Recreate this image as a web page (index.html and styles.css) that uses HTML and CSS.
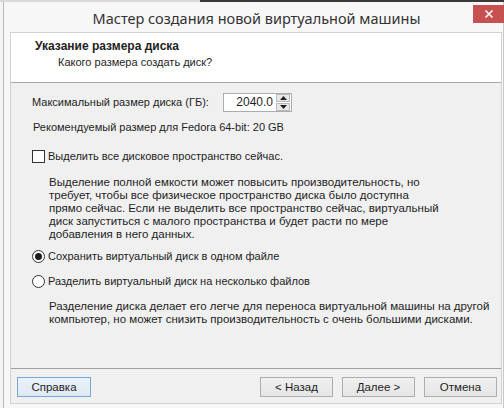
FILE: index.html
```html
<!DOCTYPE html>
<html lang="ru">
<head>
<meta charset="utf-8">
<link rel="stylesheet" href="styles.css">
</head>
<body>
<div class="desk"></div>
<div class="window">
  <div class="titlebar">
    <div class="title">Мастер создания новой виртуальной машины</div>
    <div class="close"><svg width="10" height="10" viewBox="0 0 10 10"><path d="M1.5 1.5 L8.5 8.5 M8.5 1.5 L1.5 8.5" stroke="#fff" stroke-width="1.6"/></svg></div>
  </div>
  <div class="client">
    <div class="header">
      <div class="h-title">Указание размера диска</div>
      <div class="h-sub">Какого размера создать диск?</div>
    </div>
    <div class="body">
      <div class="row size-row">
        <span class="size-label">Максимальный размер диска (ГБ):</span>
        <div class="spin">
          <span class="spin-val">2040.0</span>
          <div class="spin-btns">
            <div class="sb"><svg width="7" height="4" viewBox="0 0 7 4"><path d="M0 4 L3.5 0 L7 4Z" fill="#222"/></svg></div>
            <div class="sb"><svg width="7" height="4" viewBox="0 0 7 4"><path d="M0 0 L3.5 4 L7 0Z" fill="#222"/></svg></div>
          </div>
        </div>
      </div>
      <div class="rec">Рекомендуемый размер для Fedora 64-bit: 20 GB</div>
      <div class="opt chk-row"><span class="check"></span><span>Выделить все дисковое пространство сейчас.</span></div>
      <p class="para p1">Выделение полной емкости может повысить производительность, но<br>требует, чтобы все физическое пространство диска было доступна<br>прямо сейчас. Если не выделить все пространство сейчас, виртуальный<br>диск запуститься с малого пространства и будет расти по мере<br>добавления в него данных.</p>
      <div class="opt r1"><span class="radio on"></span><span>Сохранить виртуальный диск в одном файле</span></div>
      <div class="opt r2"><span class="radio"></span><span>Разделить виртуальный диск на несколько файлов</span></div>
      <p class="para p2">Разделение диска делает его легче для переноса виртуальной машины на другой<br>компьютер, но может снизить производительность с очень большими дисками.</p>
    </div>
    <div class="footer">
      <button class="btn focus">Справка</button>
      <div class="spacer"></div>
      <button class="btn">&lt; Назад</button>
      <button class="btn">Далее &gt;</button>
      <button class="btn">Отмена</button>
    </div>
  </div>
</div>
</body>
</html>
```

FILE: styles.css
```css
* { box-sizing: border-box; }
html, body { margin: 0; padding: 0; }
body {
  width: 504px;
  height: 408px;
  overflow: hidden;
  background: #f4f4f4;
  font-family: "Liberation Sans", Arial, sans-serif;
  font-size: 11px;
  color: #1e1e1e;
}
.desk {
  height: 2px;
  background: linear-gradient(to right, #d8d8d8 0, #d8d8d8 200px, #3a3a3a 200px);
}
.window {
  margin-left: 3px;
  width: 501px;
  height: 406px;
  border-left: 1px solid #b8b8b8;
  border-right: 1px solid #c8c8c8;
  background: #f7f7f7;
  display: flex;
  flex-direction: column;
}
.titlebar {
  height: 30px;
  display: flex;
  align-items: flex-start;
  position: relative;
}
.title {
  flex: 1;
  text-align: center;
  padding-top: 6px;
  padding-left: 6px;
  font-family: "Noto Sans", sans-serif;
  font-size: 14.5px;
  color: #333;
  line-height: 20px;
  white-space: nowrap;
}
.close {
  position: absolute;
  right: -2px;
  top: 3px;
  width: 32px;
  height: 18px;
  background: #c75050;
  display: flex;
  align-items: center;
  justify-content: center;
}
.client {
  margin: 0 1px 0 6px;
  height: 372px;
  border: 1px solid #d2d2d2;
  background: #f0f0f0;
  display: flex;
  flex-direction: column;
}
.header {
  background: #fff;
  height: 50px;
  border-bottom: 1px solid #a8a8a8;
  padding: 7px 0 0 24px;
  line-height: 13px;
}
.h-title { font-weight: bold; font-size: 12px; }
.h-sub { margin: 3px 0 0 23px; }
.body {
  flex: 1;
  padding: 10px 0 0 21px;
  line-height: 13px;
  white-space: nowrap;
}
.row { display: flex; align-items: center; }
.size-label { width: 191px; flex: none; }
.spin {
  width: 69px;
  height: 19px;
  border: 1px solid #acacac;
  background: #fff;
  display: flex;
  align-items: center;
}
.spin-val { flex: 1; text-align: right; padding-right: 2px; font-size: 12px; }
.spin-btns {
  width: 16px;
  height: 17px;
  display: flex;
  flex-direction: column;
  gap: 1px;
  padding: 0 1px;
}
.sb {
  flex: 1;
  background: #e8e8e8;
  border: 1px solid #b9b9b9;
  display: flex;
  align-items: center;
  justify-content: center;
}
.rec { margin: 9px 0 0 1px; }
.opt { display: flex; align-items: center; height: 13px; }
.chk-row { margin-top: 16px; }
.check {
  width: 13px; height: 13px;
  border: 1px solid #333;
  background: #fff;
  margin-right: 3px;
}
.radio {
  width: 13px; height: 13px;
  border: 1px solid #333;
  border-radius: 50%;
  background: #fff;
  margin-right: 3px;
  display: flex; align-items: center; justify-content: center;
}
.radio.on::after {
  content: "";
  width: 7px; height: 7px;
  border-radius: 50%;
  background: #1e1e1e;
}
.para { margin: 0 0 0 17px; line-height: 13px; font-size: 11.5px; }
.p1 { margin-top: 13px; }
.p2 { margin-top: 12px; }
.r1 { margin-top: 9px; }
.r2 { margin-top: 12px; }
.footer {
  border-top: 1px solid #a0a0a0;
  padding: 8px 4px 6px 6px;
  display: flex;
  gap: 9px;
}
.spacer { flex: 1; }
.btn {
  width: 73px;
  height: 20px;
  border: 1px solid #adadad;
  background: linear-gradient(#f0f0f0, #e5e5e5);
  font-family: "Liberation Sans", Arial, sans-serif;
  font-size: 11.5px;
  color: #1e1e1e;
  padding: 0;
}
.btn.focus {
  width: 74px;
  border-color: #7ba7d6;
  background: linear-gradient(#eaf2fa, #dfe9f4);
}
```
